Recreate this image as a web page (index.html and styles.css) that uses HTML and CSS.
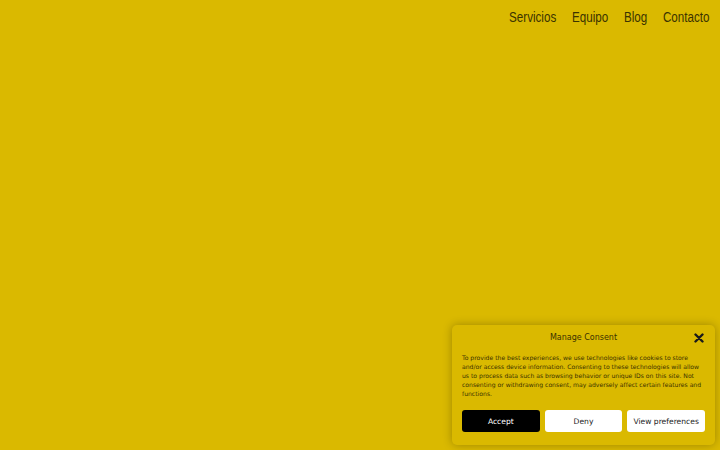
FILE: index.html
```html
<!DOCTYPE html>
<html lang="es">
<head>
<meta charset="utf-8">
<link rel="stylesheet" href="styles.css">
</head>
<body>
<header class="site-header">
  <nav class="nav">
    <a href="#">Servicios</a>
    <a href="#">Equipo</a>
    <a href="#">Blog</a>
    <a href="#">Contacto</a>
  </nav>
</header>
<div class="consent">
  <div class="consent-head">
    <span class="consent-title">Manage Consent</span>
    <span class="consent-close">
      <svg width="10" height="10" viewBox="0 0 10 10"><path d="M1.5 1.5L8.5 8.5M8.5 1.5L1.5 8.5" stroke="#1a1a1a" stroke-width="2.4" stroke-linecap="round"/></svg>
    </span>
  </div>
  <p class="consent-text">To provide the best experiences, we use technologies like cookies to store and/or access device information. Consenting to these technologies will allow us to process data such as browsing behavior or unique IDs on this site. Not consenting or withdrawing consent, may adversely affect certain features and functions.</p>
  <div class="consent-buttons">
    <button class="btn btn-accept">Accept</button>
    <button class="btn">Deny</button>
    <button class="btn">View preferences</button>
  </div>
</div>
</body>
</html>
```
FILE: styles.css
```css
html, body {
  margin: 0;
  padding: 0;
  height: 100%;
}
body {
  background: #dab900;
  font-family: "Liberation Sans", Arial, sans-serif;
  overflow: hidden;
  position: relative;
}
.site-header {
  display: flex;
  justify-content: flex-end;
  padding: 8px 11px 0 0;
}
.nav {
  display: flex;
  gap: 19px;
  transform: scaleX(0.83);
  transform-origin: right center;
}
.nav a {
  font-family: "Liberation Sans", Arial, sans-serif;
  font-size: 14px;
  line-height: 18px;
  color: #3b3300;
  text-decoration: none;
}
.consent {
  position: absolute;
  left: 452px;
  top: 325px;
  width: 263px;
  height: 120px;
  box-sizing: border-box;
  padding: 6px 10px 0 10px;
  background: #dab900;
  border-radius: 5px;
  box-shadow: 0 0 10px rgba(0,0,0,0.28);
  font-family: "DejaVu Sans", sans-serif;
  color: #3a3200;
}
.consent-head {
  position: relative;
  display: flex;
  justify-content: center;
  align-items: center;
  height: 13px;
}
.consent-title {
  font-size: 8px;
}
.consent-close {
  position: absolute;
  right: 1px;
  top: 2px;
  display: flex;
}
.consent-text {
  margin: 9px 0 0 0;
  font-size: 6.1px;
  line-height: 9px;
}
.consent-buttons {
  display: grid;
  grid-template-columns: 1fr 1fr 1fr;
  gap: 5px;
  margin-top: 12px;
}
.btn {
  height: 22px;
  border: 0;
  border-radius: 3px;
  background: #fff;
  color: #222;
  font-family: "DejaVu Sans", sans-serif;
  font-size: 7.6px;
  padding: 0;
}
.btn-accept {
  background: #000;
  color: #fff;
}
```
